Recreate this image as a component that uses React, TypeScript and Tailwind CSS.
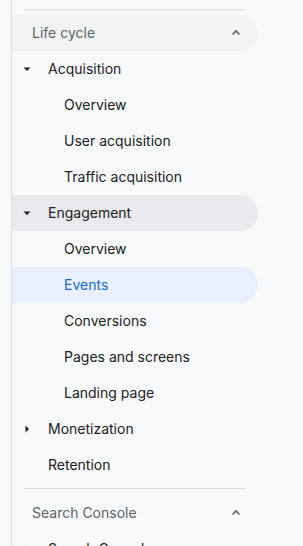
const Caret = ({ dir }: { dir: "down" | "right" }) => (
  <svg width="10" height="10" viewBox="0 0 10 10" className="shrink-0 fill-[#202124]">
    {dir === "down" ? <path d="M1.5 3.5h7L5 7z" /> : <path d="M3.5 1.5v7L7 5z" />}
  </svg>
);

const ChevronUp = () => (
  <svg width="12" height="12" viewBox="0 0 12 12" className="fill-none stroke-[#5f6368]" strokeWidth="1.6">
    <path d="M2.5 7.5L6 4l3.5 3.5" />
  </svg>
);

const Section = ({ title, active }: { title: string; active?: boolean }) => (
  <div
    className={
      "flex h-9 items-center justify-between rounded-r-full pl-5 pr-4 pb-px text-[14px] text-[#5f6368] " +
      (active ? "bg-[#f1f3f4]" : "")
    }
  >
    <span>{title}</span>
    <ChevronUp />
  </div>
);

const Group = ({ label, caret, bg }: { label: string; caret?: "down" | "right"; bg?: boolean }) => (
  <div className={"flex h-9 items-center rounded-r-full pl-[10px] pb-px text-[14px] text-[#202124] " + (bg ? "bg-[#e8eaed]" : "")}>
    <div className="flex w-[10px] justify-center">{caret && <Caret dir={caret} />}</div>
    <span className="ml-4">{label}</span>
  </div>
);

const Item = ({ label, active }: { label: string; active?: boolean }) => (
  <div
    className={
      "flex h-9 items-center rounded-r-full pl-[52px] pb-px text-[14px] " +
      (active ? "bg-[#e8f0fe] text-[#1967d2]" : "text-[#202124]")
    }
  >
    {label}
  </div>
);

const Divider = () => <div className="ml-3 mr-3 h-px bg-[#dadce0]" />;

export default function App() {
  return (
    <div className="h-[546px] w-[303px] overflow-hidden bg-[#f8f9fa] pl-[11px] font-['Inter',sans-serif]">
      <div className="h-full border-l border-[#dadce0] pr-[45px] pt-[9px]">
        <Divider />
        <div className="mt-[5px]">
          <Section title="Life cycle" active />
          <Group label="Acquisition" caret="down" />
          <Item label="Overview" />
          <Item label="User acquisition" />
          <Item label="Traffic acquisition" />
          <Group label="Engagement" caret="down" bg />
          <Item label="Overview" />
          <Item label="Events" active />
          <Item label="Conversions" />
          <Item label="Pages and screens" />
          <Item label="Landing page" />
          <Group label="Monetization" caret="right" />
          <Group label="Retention" />
        </div>
        <div className="mt-[5px]">
          <Divider />
        </div>
        <div className="mt-[6px]">
          <Section title="Search Console" />
          <Group label="Search Console" caret="right" />
        </div>
      </div>
    </div>
  );
}
